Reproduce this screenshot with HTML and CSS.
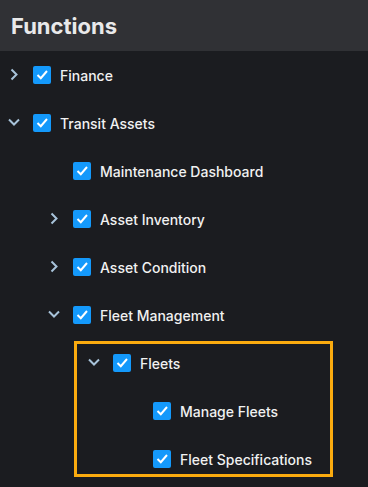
FILE: index.html
```html
<!DOCTYPE html>
<html lang="en">
<head>
  <meta charset="UTF-8">
  <title>Functions</title>
  <link rel="stylesheet" href="styles.css">
</head>
<body>
  <header class="panel-head">Functions</header>
  <ul class="tree">
    <li class="node lvl0"><span class="chev right"></span><span class="box"></span><span class="label">Finance</span></li>
    <li class="node lvl0"><span class="chev down"></span><span class="box"></span><span class="label">Transit Assets</span></li>
    <li class="node lvl1"><span class="chev none"></span><span class="box"></span><span class="label">Maintenance Dashboard</span></li>
    <li class="node lvl1"><span class="chev right"></span><span class="box"></span><span class="label">Asset Inventory</span></li>
    <li class="node lvl1"><span class="chev right"></span><span class="box"></span><span class="label">Asset Condition</span></li>
    <li class="node lvl1"><span class="chev down"></span><span class="box"></span><span class="label">Fleet Management</span></li>
    <li class="group">
      <ul class="tree">
        <li class="node lvl2"><span class="chev down"></span><span class="box"></span><span class="label">Fleets</span></li>
        <li class="node lvl3"><span class="chev none"></span><span class="box"></span><span class="label">Manage Fleets</span></li>
        <li class="node lvl3"><span class="chev none"></span><span class="box"></span><span class="label">Fleet Specifications</span></li>
      </ul>
    </li>
  </ul>
<script>
  const RIGHT = '<svg viewBox="0 0 16 16" width="16" height="16"><path d="M5.5 2.5 L10.5 7.5 L5.5 12.5" fill="none" stroke="currentColor" stroke-width="2"/></svg>';
  const DOWN = '<svg viewBox="0 0 16 16" width="16" height="16"><path d="M3 4.5 L8 9.5 L13 4.5" fill="none" stroke="currentColor" stroke-width="2"/></svg>';
  const TICK = '<svg viewBox="0 0 18 18" width="18" height="18"><path d="M4.5 9 L7.8 12.2 L14 5" fill="none" stroke="#fff" stroke-width="2"/></svg>';
  document.querySelectorAll('.chev.right').forEach(c => c.innerHTML = RIGHT);
  document.querySelectorAll('.chev.down').forEach(c => c.innerHTML = DOWN);
  document.querySelectorAll('.box').forEach(b => b.innerHTML = TICK);
</script>
</body>
</html>
```

FILE: styles.css
```css
* { box-sizing: border-box; }
body { margin: 0; background: #1b1c20; color: #f1f1f1; font-family: Inter, "Noto Sans", sans-serif; }
.panel-head { height: 51px; display: flex; align-items: center; padding-left: 11px; background: #303135; font-size: 22px; font-weight: 700; color: #e9e9ea; }
.tree { list-style: none; margin: 0; padding: 0; }
.node { height: 48px; display: flex; align-items: center; font-size: 14px; font-weight: 500; }
.lvl0 { padding-left: 6px; }
.lvl1 { padding-left: 46px; }
.lvl2 { padding-left: 86px; }
.lvl3 { padding-left: 126px; }
.chev { width: 16px; height: 16px; margin-right: 11px; color: #a8c3da; display: flex; }
.box { width: 18px; height: 18px; border-radius: 2px; background: #1499fb; display: flex; margin-right: 9px; }
.group { position: relative; }
.group::after { content: ""; position: absolute; top: 2px; bottom: 6px; left: 74px; right: 35px; border: 3px solid #fbab0f; pointer-events: none; }
```
